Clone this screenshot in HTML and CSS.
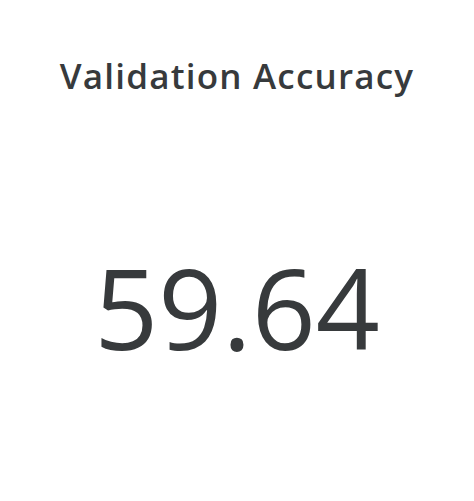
FILE: index.html
```html
<!DOCTYPE html>
<html>
<head>
<meta charset="utf-8">
<link rel="stylesheet" href="styles.css">
</head>
<body>
<div class="card">
  <h1 class="title">Validation Accuracy</h1>
  <div class="value">59.64</div>
</div>
</body>
</html>
```
FILE: styles.css
```css
html, body {
  margin: 0;
  padding: 0;
  background: #ffffff;
}
.card {
  width: 474px;
  height: 501px;
  display: flex;
  flex-direction: column;
  align-items: center;
  color: #373a3c;
  font-family: "Open Sans", "Noto Sans", sans-serif;
}
.title {
  margin: 0;
  padding-top: 52px;
  font-size: 35px;
  font-weight: 600;
  line-height: 48px;
  letter-spacing: 1.2px;
}
.value {
  margin-top: 142px;
  font-size: 112px;
  font-weight: 400;
  line-height: 130px;
}
```
